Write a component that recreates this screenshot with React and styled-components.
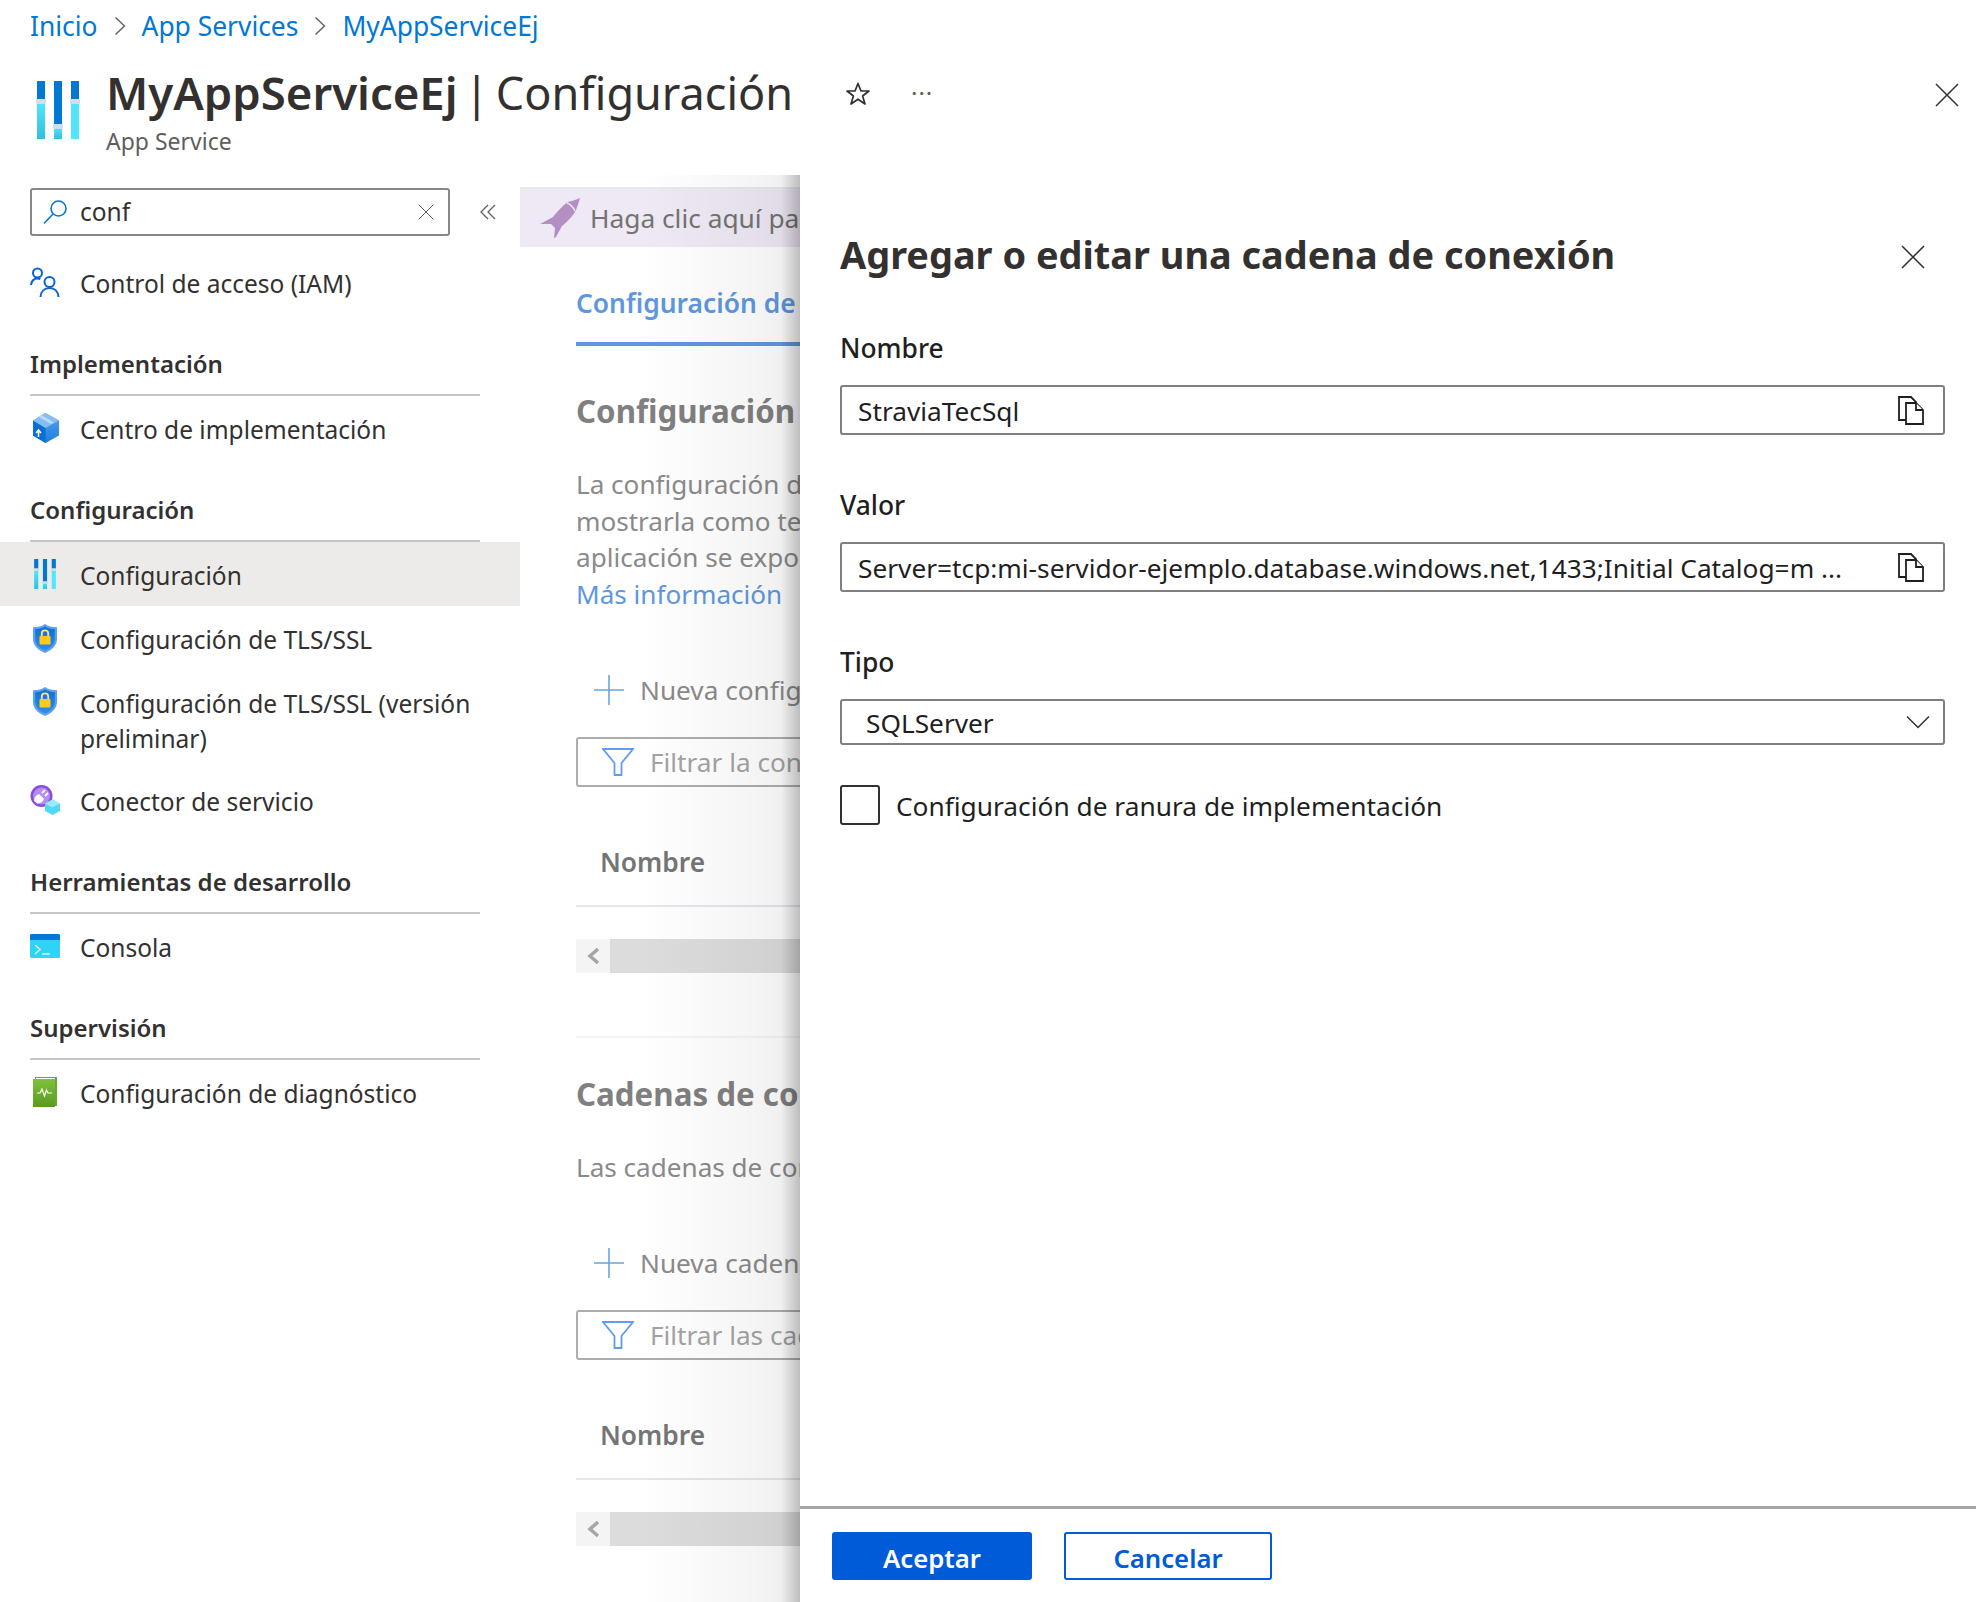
import styled, { createGlobalStyle } from 'styled-components'

const FONT = '"Noto Sans", "Open Sans", sans-serif'

const Global = createGlobalStyle`
  html, body { margin: 0; padding: 0; background: #fff; }
  * { box-sizing: border-box; }
  body { font-family: ${FONT}; color: #323130; }
`

const Page = styled.div`
  position: relative;
  width: 1976px;
  height: 1602px;
  overflow: hidden;
  background: #fff;
`

/* ---------- header ---------- */
const Breadcrumb = styled.nav`
  height: 47px;
  padding: 6px 0 0 30px;
  display: flex;
  align-items: flex-start;
  font-size: 26.4px;
  line-height: 40px;
  color: #0078d4;
`

const Crumb = styled.span`
  white-space: nowrap;
`

const CrumbSep = styled.span`
  display: flex;
  align-items: center;
  justify-content: center;
  width: 44px;
  height: 40px;
`

const TitleRow = styled.header`
  height: 128px;
  display: flex;
  align-items: flex-start;
  padding-left: 36px;
`

const LogoSlot = styled.div`
  width: 70px;
  padding-top: 34px;
  flex: none;
`

const TitleBlock = styled.div`
  padding-top: 15px;
  width: 730px;
  flex: none;
`

const Title = styled.h1`
  margin: 0;
  font-size: 45px;
  line-height: 60px;
  font-weight: 400;
  word-spacing: -5px;
  color: #323130;
  white-space: nowrap;
  b { font-weight: 600; font-size: 45.5px; }
`

const Subtitle = styled.div`
  margin-top: 2px;
  font-size: 23px;
  line-height: 32px;
  color: #605e5c;
`

const HeaderActions = styled.div`
  display: flex;
  align-items: center;
  gap: 40px;
  height: 64px;
  margin-top: 15px;
  margin-left: 9px;
`

const CloseTop = styled.div`
  margin-left: auto;
  margin-right: 17px;
  margin-top: 16px;
  height: 64px;
  display: flex;
  align-items: center;
`

const Dots = styled.span`
  font-size: 24px;
  line-height: 20px;
  letter-spacing: 1px;
  color: #605e5c;
  margin-top: -3px;
`

/* ---------- body ---------- */
const Body = styled.div`
  display: grid;
  grid-template-columns: 520px 1fr;
`

const Sidebar = styled.aside`
  padding-top: 13px;
`

const SearchRow = styled.div`
  display: flex;
  align-items: center;
  padding-left: 30px;
  margin-bottom: 14px;
`

const SearchBox = styled.div`
  width: 420px;
  height: 48px;
  border: 2px solid #8a8886;
  border-radius: 3px;
  display: flex;
  align-items: center;
  padding: 0 14px 0 10px;
  font-size: 24.5px;
  color: #323130;
`

const SearchValue = styled.span`
  margin: -2px 0 0 12px;
  flex: 1;
`

const Collapse = styled.div`
  margin-left: 29px;
  display: flex;
`

const NavItem = styled.div`
  display: flex;
  align-items: ${p => (p.$tall ? 'flex-start' : 'center')};
  min-height: ${p => (p.$tall ? '98px' : '64px')};
  padding: ${p => (p.$tall ? '14px 30px 0' : '0 30px')};
  background: ${p => (p.$active ? '#edebe9' : 'transparent')};
  font-size: 24.5px;
  line-height: 35px;
  color: #323130;
`

const NavIcon = styled.span`
  width: 30px;
  height: 35px;
  flex: none;
  display: flex;
  align-items: center;
  justify-content: center;
`

const NavLabel = styled.span`
  margin-left: 20px;
  padding-top: 2px;
`

const SectionHeader = styled.div`
  margin: 24px 40px 0 30px;
  padding: 2px 0 6px;
  border-bottom: 2px solid #c8c6c4;
  font-size: 24px;
  line-height: 48px;
  font-weight: 600;
  color: #323130;
`

const Main = styled.main`
  min-width: 0;
  padding-top: 12px;
`

const Banner = styled.div`
  height: 60px;
  background: #efe9f5;
  border-top: 2px solid #e9e9e9;
  display: flex;
  align-items: center;
  padding-left: 20px;
  font-size: 26.3px;
  color: #737373;
  white-space: nowrap;
`

const BannerText = styled.span`
  margin-left: 10px;
`

const Content = styled.div`
  padding-left: 56px;
  white-space: nowrap;
`

const Tab = styled.div`
  padding-top: 36px;
  padding-bottom: 19px;
  font-size: 26.4px;
  line-height: 40px;
  font-weight: 600;
  color: #5e97e0;
  border-bottom: 4px solid #5e97e0;
`

const Heading = styled.h2`
  margin: ${p => p.$top}px 0 0;
  font-size: 31.3px;
  line-height: 44px;
  font-weight: 700;
  color: #808080;
`

const Para = styled.div`
  margin-top: 33px;
`

const ParaLine = styled.div`
  height: 36.7px;
  font-size: 26.1px;
  line-height: 36.7px;
  color: ${p => (p.$link ? '#5e97e0' : '#8a8a8a')};
`

const AddRow = styled.div`
  margin-top: ${p => p.$top}px;
  height: 50px;
  display: flex;
  align-items: center;
  padding-left: 18px;
  font-size: 26.2px;
  color: #8a8a8a;
`

const AddLabel = styled.span`
  margin-left: 16px;
`

const FilterBox = styled.div`
  margin-top: 22px;
  height: 50px;
  border: 2px solid #adadad;
  border-radius: 3px;
  display: flex;
  align-items: center;
  padding-left: 24px;
  font-size: 26.2px;
  color: #a3a3a3;
`

const FilterLabel = styled.span`
  margin-left: 16px;
`

const TableHead = styled.div`
  margin-top: 32px;
  height: 88px;
  display: flex;
  align-items: center;
  padding-left: 24px;
  border-bottom: 2px solid #e3e6ea;
  font-size: 26.3px;
  font-weight: 600;
  color: #757575;
`

const ScrollBar = styled.div`
  margin-top: 32px;
  height: 34px;
  display: flex;
  background: #dcdcdc;
`

const ScrollButton = styled.div`
  width: 34px;
  background: #f4f4f4;
  display: flex;
  align-items: center;
  justify-content: center;
`

const Divider = styled.div`
  margin-top: 63px;
  height: 2px;
  background: #f5f5f5;
`

/* ---------- shadow under the blade ---------- */
const BladeShade = styled.div`
  position: absolute;
  top: 175px;
  bottom: 0;
  left: 640px;
  width: 160px;
  background: linear-gradient(
    90deg,
    rgba(0, 0, 0, 0) 0,
    rgba(0, 0, 0, 0.04) 70%,
    rgba(0, 0, 0, 0.06) 88%,
    rgba(0, 0, 0, 0.26) 100%
  );
`

/* ---------- blade ---------- */
const Blade = styled.section`
  position: absolute;
  top: 175px;
  bottom: 0;
  left: 800px;
  right: 0;
  background: #fff;
  display: flex;
  flex-direction: column;
`

const BladeBody = styled.div`
  flex: 1;
  padding: 56px 31px 0 40px;
`

const BladeTop = styled.div`
  display: flex;
  align-items: flex-start;
  justify-content: space-between;
  padding-right: 20px;
  margin-bottom: 51px;
`

const BladeTitle = styled.h2`
  margin: 0;
  height: 48px;
  font-size: 37.9px;
  line-height: 46px;
  font-weight: 700;
  color: #323130;
`

const BladeClose = styled.span`
  display: flex;
  margin-top: 14px;
`

const Field = styled.div`
  margin-bottom: ${p => p.$gap}px;
`

const FieldLabel = styled.label`
  display: block;
  margin-bottom: 19px;
  font-size: 26.4px;
  line-height: 36px;
  font-weight: 500;
  color: #1f1f1f;
`

const FieldBox = styled.div`
  height: ${p => p.$h || 50}px;
  border: 2px solid #7f7f7f;
  border-radius: 3px;
  display: flex;
  align-items: center;
  justify-content: space-between;
  padding: 0 ${p => (p.$select ? 13 : 19)}px 0 ${p => (p.$select ? 24 : 16)}px;
  font-size: 26.25px;
  color: #1f1f1f;
  white-space: nowrap;
`

const FieldValue = styled.span`
  padding-top: 2px;
`

const CheckRow = styled.div`
  margin-top: -13px;
  display: flex;
  align-items: center;
  font-size: 26.3px;
  color: #1f1f1f;
`

const CheckBox = styled.span`
  width: 40px;
  height: 40px;
  border: 2px solid #323130;
  border-radius: 3px;
  flex: none;
`

const CheckLabel = styled.span`
  margin-left: 16px;
  padding-top: 2px;
`

const BladeFooter = styled.footer`
  height: 96px;
  border-top: 3px solid #a6a6a6;
  padding: 23px 0 0 32px;
  display: flex;
  align-items: flex-start;
  gap: 32px;
`

const Button = styled.button`
  width: ${p => p.$w}px;
  height: 48px;
  border-radius: 3px;
  border: 2px solid #005bd8;
  background: ${p => (p.$primary ? '#005bd8' : '#fff')};
  color: ${p => (p.$primary ? '#fff' : '#005bd8')};
  font-family: ${FONT};
  font-size: 25.7px;
  font-weight: 600;
  line-height: 44px;
  padding: 3px 0 0;
`

/* ---------- icons ---------- */
const Chevron = () => (
  <svg width="12" height="20" viewBox="0 0 12 20" fill="none" stroke="#605e5c" strokeWidth="1.4">
    <path d="M1.5 1.5 10.5 10 1.5 18.5" />
  </svg>
)

const Cross = ({ size = 24, color = '#323130' }) => (
  <svg width={size} height={size} viewBox="0 0 24 24" fill="none" stroke={color} strokeWidth="1.5">
    <path d="M1 1 23 23M23 1 1 23" />
  </svg>
)

const SlidersIcon = ({ width, height, id }) => (
  <svg width={width} height={height} viewBox="0 0 44 58">
    <defs>
      <linearGradient id={id} x1="0" y1="0" x2="0" y2="1">
        <stop offset="0" stopColor="#50e6ff" />
        <stop offset="1" stopColor="#32bedd" />
      </linearGradient>
    </defs>
    <rect x="1" y="0" width="8" height="22" fill="#0078d4" />
    <rect x="1" y="22" width="8" height="36" fill={`url(#${id})`} />
    <rect x="18" y="0" width="8" height="46" fill="#0078d4" />
    <rect x="18" y="46" width="8" height="12" fill={`url(#${id})`} />
    <rect x="35" y="0" width="8" height="22" fill="#0078d4" />
    <rect x="35" y="22" width="8" height="36" fill="#50e6ff" />
    <rect x="0" y="18" width="10" height="5" rx="1" fill="#d2dee6" />
    <rect x="17" y="43" width="10" height="5" rx="1" fill="#d2dee6" />
    <rect x="34" y="18" width="10" height="5" rx="1" fill="#d2dee6" />
  </svg>
)

const StarIcon = () => (
  <svg width="26" height="26" viewBox="0 0 26 26" fill="none" stroke="#323130" strokeWidth="1.7" strokeLinejoin="round">
    <path d="M13 2.5 16 10h8l-6.4 5 2.4 8-7-4.8L6 23l2.4-8L2 10h8z" />
  </svg>
)

const SearchIcon = () => (
  <svg width="26" height="26" viewBox="0 0 26 26" fill="none" stroke="#0078d4" strokeWidth="1.6">
    <circle cx="16.5" cy="9.5" r="7.5" />
    <path d="M11 15 2 24.5" />
  </svg>
)

const CollapseIcon = () => (
  <svg width="18" height="16" viewBox="0 0 18 16" fill="none" stroke="#605e5c" strokeWidth="1.3">
    <path d="M9 1 2 8l7 7M16 1 9 8l7 7" />
  </svg>
)

const PeopleIcon = () => (
  <svg width="30" height="30" viewBox="0 0 30 30" fill="none" stroke="#0a63d6" strokeWidth="2">
    <circle cx="7.5" cy="6" r="4.5" />
    <path d="M1 18c.6-4 3-6.5 6.5-6.5 1 0 2 .2 2.8.7" />
    <circle cx="19.5" cy="15" r="5" />
    <path d="M10.5 30c.4-5.5 3.8-9 9-9s8.6 3.500 9 9" />
  </svg>
)

const CubeIcon = () => (
  <svg width="27" height="30" viewBox="0 0 27 30">
    <defs>
      <linearGradient id="cubeRight" x1="0" y1="0" x2="0" y2="1">
        <stop offset="0" stopColor="#5ea0ef" />
        <stop offset="1" stopColor="#1b7fdc" />
      </linearGradient>
    </defs>
    <path d="M13.5 0 27 7.5v15L13.5 30 1 22.5v-15z" fill="url(#cubeRight)" />
    <path d="M1 7.5 13.5 15V30L1 22.5z" fill="#0a6fd2" />
    <path d="M13.5 0 27 7.5 13.5 15 1 7.5z" fill="#83bdf4" />
    <path d="M6 3.500 19 11l3-1.700L9 2z" fill="#b9dbf8" />
    <path d="M6.500 24v-6M4 20l2.500-3 2.500 3" fill="none" stroke="#fff" strokeWidth="1.500" />
  </svg>
)

const ShieldIcon = ({ id }) => (
  <svg width="24" height="29" viewBox="0 0 24 29">
    <defs>
      <linearGradient id={id} x1="0" y1="0" x2="0" y2="1">
        <stop offset="0" stopColor="#0f6fd2" />
        <stop offset="1" stopColor="#2f8fe8" />
      </linearGradient>
    </defs>
    <path d="M12 0c3 2.200 7 3.200 12 3.200V15c0 6.500-5 11-12 14C5 26 0 21.500 0 15V3.200C5 3.200 9 2.200 12 0z" fill="#5ea0ef" />
    <path d="M12 2.500c3 1.800 6 2.500 9.800 2.700V15c0 5.300-4 9-9.800 11.600C6.200 24 2.200 20.300 2.200 15V5.200C6 5 9 4.300 12 2.500z" fill={`url(#${id})`} />
    <rect x="6.500" y="12" width="11" height="8.500" rx="1" fill="#ffc91f" />
    <path d="M8.800 12V9.500a3.200 3.200 0 0 1 6.400 0V12" fill="none" stroke="#ffe27a" strokeWidth="1.800" />
  </svg>
)

const ConnectorIcon = () => (
  <svg width="30" height="30" viewBox="0 0 30 30">
    <circle cx="11.500" cy="11" r="11" fill="#8a4be0" />
    <circle cx="11.500" cy="11" r="8.500" fill="#b78cf0" />
    <path d="M4 16c0-3 2-6 5-7l5 5c-1 3-4 4.500-7 4.500z" fill="#fff" />
    <path d="M12 8l3-3M15 11l3-3" stroke="#fff" strokeWidth="1.800" />
    <path d="M22.500 14.500 30 18.500v7.500l-7.500 4-7.500-4v-7.500z" fill="#50d8f5" />
    <path d="M22.500 14.500 30 18.500l-7.500 4-7.500-4z" fill="#9cebfb" />
  </svg>
)

const ConsoleIcon = () => (
  <svg width="30" height="24" viewBox="0 0 30 24">
    <rect width="30" height="24" rx="1.500" fill="#2fd3f5" />
    <path d="M0 1.500A1.500 1.500 0 0 1 1.500 0h27A1.500 1.500 0 0 1 30 1.500V6H0z" fill="#0078d4" />
    <path d="M5 11l5 4.500-5 4.500" fill="none" stroke="#d8f6fd" strokeWidth="1.500" />
    <path d="M12 20h8" stroke="#d8f6fd" strokeWidth="1.500" />
  </svg>
)

const DiagIcon = () => (
  <svg width="24" height="30" viewBox="0 0 24 30">
    <defs>
      <linearGradient id="diagFill" x1="0" y1="0" x2="0" y2="1">
        <stop offset="0" stopColor="#7dc23a" />
        <stop offset="1" stopColor="#5a9a20" />
      </linearGradient>
    </defs>
    <path d="M2 0h22v29H2z" fill="#6aa82c" />
    <path d="M3 1h19v27H3z" fill="#fff" />
    <path d="M0 2h22v28H0z" fill="url(#diagFill)" />
    <path d="M4 16h3l2-4 2.500 7 2-6 1.500 3h4" fill="none" stroke="#fff" strokeWidth="1.200" />
  </svg>
)

const RocketIcon = () => (
  <svg width="40" height="40" viewBox="0 0 40 40">
    <path
      d="M40 0C36 2 31 3 28 4 22 8 17 14 13 19L2 25 0 26H11L15 30 14 40 16 39 22 28C27 24 33 18 36 12 37 9 39 4 40 0Z"
      fill="#b48fc4"
    />
    <path d="M27 5c3 1 6 4 8 8" fill="none" stroke="#efe9f5" strokeWidth="1.400" />
  </svg>
)

const PlusIcon = () => (
  <svg width="30" height="30" viewBox="0 0 30 30" stroke="#6aa5dc" strokeWidth="1.600">
    <path d="M15 0v30M0 15h30" />
  </svg>
)

const FunnelIcon = () => (
  <svg width="32" height="28" viewBox="0 0 32 28" fill="none" stroke="#5f9cf0" strokeWidth="1.800">
    <path d="M1 1h30L19.500 15v12h-7V15z" />
  </svg>
)

const ScrollArrow = () => (
  <svg width="14" height="18" viewBox="0 0 14 18" fill="none" stroke="#a6a6a6" strokeWidth="3.500">
    <path d="M12 2 4 9l8 7" />
  </svg>
)

const CopyIcon = () => (
  <svg width="26" height="29" viewBox="0 0 26 29" fill="#fff" stroke="#1f1f1f" strokeWidth="1.800">
    <path d="M1 1h12l5 5v18H1z" />
    <path d="M8 7h10l7 7v14H8z" />
    <path d="M18 7v7h7" />
  </svg>
)

const DropdownIcon = () => (
  <svg width="24" height="14" viewBox="0 0 24 14" fill="none" stroke="#323130" strokeWidth="1.500">
    <path d="M1 1.500 12 12.500 23 1.500" />
  </svg>
)

const Row = ({ icon, active, tall, children }) => (
  <NavItem $active={active} $tall={tall}>
    <NavIcon>{icon}</NavIcon>
    <NavLabel>{children}</NavLabel>
  </NavItem>
)

const ListSection = ({ heading, top, addTop, intro, addLabel, filterLabel }) => (
  <>
    <Heading $top={top}>{heading}</Heading>
    <Para>{intro}</Para>
    <AddRow $top={addTop}>
      <PlusIcon />
      <AddLabel>{addLabel}</AddLabel>
    </AddRow>
    <FilterBox>
      <FunnelIcon />
      <FilterLabel>{filterLabel}</FilterLabel>
    </FilterBox>
    <TableHead>Nombre</TableHead>
    <ScrollBar>
      <ScrollButton>
        <ScrollArrow />
      </ScrollButton>
    </ScrollBar>
  </>
)

export default function App() {
  return (
    <Page>
      <Global />
      <Breadcrumb>
        <Crumb>Inicio</Crumb>
        <CrumbSep><Chevron /></CrumbSep>
        <Crumb>App Services</Crumb>
        <CrumbSep><Chevron /></CrumbSep>
        <Crumb>MyAppServiceEj</Crumb>
      </Breadcrumb>
      <TitleRow>
        <LogoSlot>
          <SlidersIcon width={44} height={58} id="logoFill" />
        </LogoSlot>
        <TitleBlock>
          <Title><b>MyAppServiceEj</b> | Configuración</Title>
          <Subtitle>App Service</Subtitle>
        </TitleBlock>
        <HeaderActions>
          <StarIcon />
          <Dots>···</Dots>
        </HeaderActions>
        <CloseTop>
          <Cross />
        </CloseTop>
      </TitleRow>

      <Body>
        <Sidebar>
          <SearchRow>
            <SearchBox>
              <SearchIcon />
              <SearchValue>conf</SearchValue>
              <Cross size={16} color="#605e5c" />
            </SearchBox>
            <Collapse><CollapseIcon /></Collapse>
          </SearchRow>
          <Row icon={<PeopleIcon />}>Control de acceso (IAM)</Row>
          <SectionHeader>Implementación</SectionHeader>
          <Row icon={<CubeIcon />}>Centro de implementación</Row>
          <SectionHeader>Configuración</SectionHeader>
          <Row active icon={<SlidersIcon width={24} height={30} id="navFill" />}>Configuración</Row>
          <Row icon={<ShieldIcon id="shieldA" />}>Configuración de TLS/SSL</Row>
          <Row tall icon={<ShieldIcon id="shieldB" />}>Configuración de TLS/SSL (versión preliminar)</Row>
          <Row icon={<ConnectorIcon />}>Conector de servicio</Row>
          <SectionHeader>Herramientas de desarrollo</SectionHeader>
          <Row icon={<ConsoleIcon />}>Consola</Row>
          <SectionHeader>Supervisión</SectionHeader>
          <Row icon={<DiagIcon />}>Configuración de diagnóstico</Row>
        </Sidebar>

        <Main>
          <Banner>
            <RocketIcon />
            <BannerText>Haga clic aquí para</BannerText>
          </Banner>
          <Content>
            <Tab>Configuración de</Tab>
            <ListSection
              top={43}
              addTop={52}
              heading="Configuración"
              intro={
                <>
                  <ParaLine>La configuración de</ParaLine>
                  <ParaLine>mostrarla como texto</ParaLine>
                  <ParaLine>aplicación se expone</ParaLine>
                  <ParaLine $link>Más información</ParaLine>
                </>
              }
              addLabel="Nueva configuración"
              filterLabel="Filtrar la configuración"
            />
            <Divider />
            <ListSection
              top={34}
              addTop={52.7}
              heading="Cadenas de conexión"
              intro={<ParaLine>Las cadenas de conexión</ParaLine>}
              addLabel="Nueva cadena"
              filterLabel="Filtrar las cadenas"
            />
          </Content>
        </Main>
      </Body>

      <BladeShade />
      <Blade>
        <BladeBody>
          <BladeTop>
            <BladeTitle>Agregar o editar una cadena de conexión</BladeTitle>
            <BladeClose><Cross /></BladeClose>
          </BladeTop>
          <Field $gap={52}>
            <FieldLabel>Nombre</FieldLabel>
            <FieldBox>
              <FieldValue>StraviaTecSql</FieldValue>
              <CopyIcon />
            </FieldBox>
          </Field>
          <Field $gap={52}>
            <FieldLabel>Valor</FieldLabel>
            <FieldBox>
              <FieldValue>Server=tcp:mi-servidor-ejemplo.database.windows.net,1433;Initial Catalog=m ...</FieldValue>
              <CopyIcon />
            </FieldBox>
          </Field>
          <Field $gap={53}>
            <FieldLabel>Tipo</FieldLabel>
            <FieldBox $h={46} $select>
              <FieldValue>SQLServer</FieldValue>
              <DropdownIcon />
            </FieldBox>
          </Field>
          <CheckRow>
            <CheckBox />
            <CheckLabel>Configuración de ranura de implementación</CheckLabel>
          </CheckRow>
        </BladeBody>
        <BladeFooter>
          <Button $primary $w={200}>Aceptar</Button>
          <Button $w={208}>Cancelar</Button>
        </BladeFooter>
      </Blade>
    </Page>
  )
}
